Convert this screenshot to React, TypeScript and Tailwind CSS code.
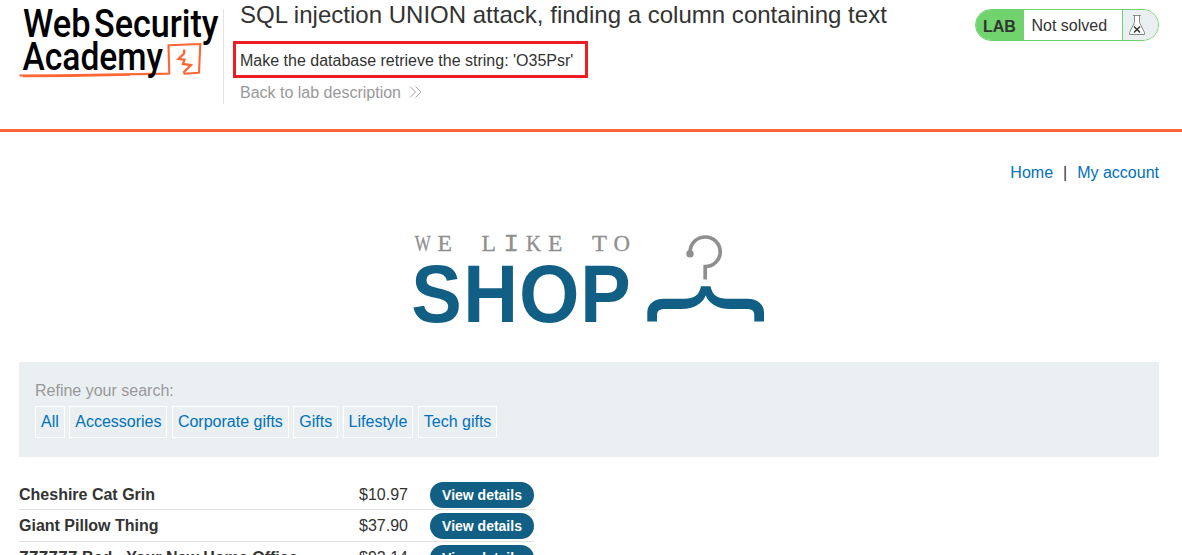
const categories = ['All', 'Accessories', 'Corporate gifts', 'Gifts', 'Lifestyle', 'Tech gifts'];

const products = [
  { name: 'Cheshire Cat Grin', price: '$10.97' },
  { name: 'Giant Pillow Thing', price: '$37.90' },
  { name: 'ZZZZZZ Bed - Your New Home Office', price: '$92.14' },
];

function AcademyLogo() {
  return (
    <svg width="204" height="95" viewBox="19 9 204 95" className="block overflow-visible" fontFamily="Roboto, sans-serif" fontWeight="500" fill="#000">
      <path d="M19.5 75.500 L60 75.300 L169.300 73.600 L168.500 45.300 L200.300 44 L199 72.800 L183.500 73.800" fill="none" stroke="#ff6633" strokeWidth="2.100" strokeLinejoin="round" />
      <path d="M23 76.400 L70 76.200 L130 75" fill="none" stroke="#ff6633" strokeWidth="1.500" />
      <path d="M184.200 49.500 L184 53.500 L178.500 58.800 L184.500 59.600 L183 64 L190.800 65 L183.300 72.700" fill="none" stroke="#ff6633" strokeWidth="2.300" />
      <text x="23" y="37.300" fontSize="38" textLength="67.500" lengthAdjust="spacingAndGlyphs">Web</text>
      <text x="94" y="37.300" fontSize="38" textLength="124.500" lengthAdjust="spacingAndGlyphs">Security</text>
      <text x="22.500" y="70" fontSize="38" textLength="140.500" lengthAdjust="spacingAndGlyphs">Academy</text>
    </svg>
  );
}

const tagline: [string, number, number][] = [
  ['W', 414.8, 16], ['E', 437.5, 14.5], ['L', 481.5, 14.5],
  ['K', 526, 15], ['E', 548, 14.5], ['T', 592, 15], ['O', 613.5, 16.5],
];

const wordmark: [string, number, number][] = [
  ['S', 411.3, 50.5], ['H', 463.2, 54.8], ['O', 519, 60.5], ['P', 580.2, 50.5],
];

function ShopLogo() {
  return (
    <svg width="352" height="90" viewBox="413 234 352 90" className="block overflow-visible">
      <g fontFamily="Liberation Serif, serif" fontSize="22.5" fill="#8f8f90" stroke="#8f8f90" strokeWidth=".3">
        {tagline.map(([c, x, w]) => (
          <text key={x} x={x} y="250.700" textLength={w} lengthAdjust="spacingAndGlyphs">{c}</text>
        ))}
        <text x="503.400" y="250.700" fontFamily="Liberation Mono, monospace" fontSize="23" textLength="15.500" lengthAdjust="spacingAndGlyphs">I</text>
      </g>
      <g fontFamily="Liberation Sans, sans-serif" fontWeight="700" fontSize="81" fill="#125f85">
        {wordmark.map(([c, x, w]) => (
          <text key={x} x={x} y="321.700" textLength={w} lengthAdjust="spacingAndGlyphs">{c}</text>
        ))}
      </g>
      <circle cx="690" cy="253.800" r="3.700" fill="#8f8f90" />
      <path d="M690 253 C690 243 697 237 705.300 237 C714 237 720.200 244 720.200 252 C720.200 260 713.500 266.500 705.200 266.700 V279.500" fill="none" stroke="#8f8f90" strokeWidth="3.700" />
      <path d="M701 286.300 H710.500 C712.500 296 718 298.700 727 298.700 H747 C758 299 764 304 764 313 V321.500 H754.300 V315 C754.300 310.500 751.500 309 746 309 H730 C717 309 708.500 303 705.700 295.500 C703 303 694.500 309 681.500 309 H666 C660 309 657 310.500 657 315 V321.500 H647.300 V313 C647.300 304 653.500 299 664 298.700 H684.500 C693.500 298.700 699 296 701 286.300 Z" fill="#125f85" />
    </svg>
  );
}

function Flask() {
  return (
    <svg width="18" height="22" viewBox="1128 14 18 22" className="block" fill="none" stroke="#858a8c" strokeWidth="1">
      <path d="M1134.500 15.500 V22.500 L1129.500 32.500 V34.500 H1144.500 V32.500 L1139.500 22.500 V15.500" fill="#fff" />
      <path d="M1133 15.500 H1141" />
      <path d="M1134 26.500 L1140 32.500 M1140 26.500 L1134 32.500" stroke="#333332" strokeWidth="1.500" />
    </svg>
  );
}

function LabStatus() {
  return (
    <div className="flex h-8 w-[184px] overflow-hidden rounded-full border border-[#70d36e] bg-white">
      <div className="w-12 bg-[#70d36e] pl-[7px] font-bold leading-[33px]">LAB</div>
      <div className="w-[98px] pl-[7.5px] leading-[31px]">Not solved</div>
      <div className="flex-1 border-l border-[#70d36e] bg-[#eaeff2] pl-[5px] pt-1">
        <Flask />
      </div>
    </div>
  );
}

export default function App() {
  return (
    <div className="h-[555px] overflow-hidden bg-white font-['Liberation_Sans',Arial,sans-serif] text-base leading-[18px] text-[#333332]">
      <header className="flex h-[132px] border-b-[3px] border-[#ff6633] pl-[19px] pr-[23px]">
        <div className="mt-[9px] h-[95px] w-[205px] shrink-0 border-r border-[#e3e3e3]">
          <AcademyLogo />
        </div>
        <div className="flex-1 pl-[9px]">
          <h2 className="h-[41px] whitespace-nowrap pl-[7px] text-2xl leading-[30px] tracking-[0.012px]">
            SQL injection UNION attack, finding a column containing text
          </h2>
          <p className="h-[37px] w-[355px] border-[3px] border-[#ee1c25] pl-1 leading-[33px]">
            Make the database retrieve the string: 'O35Psr'
          </p>
          <a className="mt-1.5 flex items-center pl-[7px] text-[#999]">
            Back to lab description
            <svg width="14" height="14" viewBox="0 0 14 14" className="-mt-0.5 ml-2 block" fill="none" stroke="#999" strokeWidth=".9">
              <path d="M1 1.500 L6.500 7 L1 12.500 M6.500 1.500 L12 7 L6.500 12.500" />
            </svg>
          </a>
        </div>
        <div className="mt-[9px]">
          <LabStatus />
        </div>
      </header>

      <main className="pl-[19px] pr-[23px]">
        <nav className="flex justify-end pt-8 text-[#0071ba]">
          <a>Home</a>
          <span className="mx-2.5 text-[#333332]">|</span>
          <a>My account</a>
        </nav>

        <div className="mt-[52px] flex justify-center">
          <ShopLogo />
        </div>

        <section className="mt-[38px] h-[95px] bg-[#eaeff2] px-4 pt-5">
          <label className="block text-[#999]">Refine your search:</label>
          <div className="mt-1.5 flex gap-[4.45px]">
            {categories.map((c) => (
              <a key={c} className="h-8 whitespace-nowrap border border-white px-[5px] leading-[30px] text-[#0071ba]">{c}</a>
            ))}
          </div>
        </section>

        <section className="mt-[22px] w-[515px] leading-[26px]">
          {products.map((p) => (
            <div key={p.name} className="flex h-[31.4px] items-start border-b border-[#e3e3e3] pt-[3px]">
              <span className="w-[340px] font-bold">{p.name}</span>
              <span className="w-[71px]">{p.price}</span>
              <a className="h-[26px] w-[104px] rounded-full bg-[#125f85] text-center text-sm font-bold leading-[26px] text-white">View details</a>
            </div>
          ))}
        </section>
      </main>
    </div>
  );
}
